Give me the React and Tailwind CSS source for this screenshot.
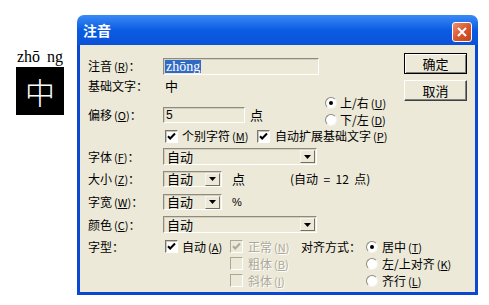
import React from 'react';

// mnemonic letter, e.g. (R) with the R underlined
function Mn({ k }) {
  return (
    <span className="ml-[2px] text-[11px]">
      (<span className="underline underline-offset-1">{k}</span>)
    </span>
  );
}

function Label({ children }) {
  return <div className="w-[75px] shrink-0 whitespace-nowrap leading-[14px]">{children}</div>;
}

function Sunken({ className = '', children }) {
  return (
    <div
      className={
        'flex shrink-0 items-center border border-t-[#8d8a7e] border-l-[#8d8a7e] border-b-white border-r-white bg-[#ECE9D8] shadow-[inset_1px_1px_0_#d2cfc2] ' +
        className
      }
    >
      {children}
    </div>
  );
}

function Combo({ className = '' }) {
  return (
    <Sunken className={'justify-between pl-[3px] pr-[1px] ' + className}>
      <span className="leading-[14px] text-[13px]">自动</span>
      <div className="flex h-[13px] w-[15px] items-center justify-center border border-t-[#f6f5ef] border-l-[#f6f5ef] border-b-[#716f64] border-r-[#716f64] bg-[#ECE9D8]">
        <svg width="7" height="4" viewBox="0 0 7 4">
          <path d="M0 0h7L3.5 4z" fill="#000" />
        </svg>
      </div>
    </Sunken>
  );
}

function Check({ checked, disabled }) {
  return (
    <div
      className={
        'flex h-[13px] w-[13px] shrink-0 items-center justify-center border ' +
        (disabled
          ? 'border-t-[#aca899] border-l-[#aca899] border-b-white border-r-white bg-[#ECE9D8]'
          : 'border-t-[#7a786e] border-l-[#7a786e] border-b-white border-r-white bg-white shadow-[inset_1px_1px_0_#c9c6b8]')
      }
    >
      {checked && (
        <svg width="9" height="9" viewBox="0 0 9 9">
          <path
            d="M1 4.2l2.2 2.3L8 1.5"
            fill="none"
            stroke={disabled ? '#aca899' : '#000'}
            strokeWidth="2"
          />
        </svg>
      )}
    </div>
  );
}

function Radio({ on }) {
  return (
    <div className="flex h-[12px] w-[12px] shrink-0 items-center justify-center rounded-full border border-t-[#8d8a7e] border-l-[#8d8a7e] border-b-[#f4f3ee] border-r-[#f4f3ee] bg-white">
      {on && <div className="h-[4px] w-[4px] rounded-full bg-black" />}
    </div>
  );
}

function Opt({ children, gap = 'gap-[4px]' }) {
  return (
    <div className={'flex h-[17px] shrink-0 items-center whitespace-nowrap ' + gap}>{children}</div>
  );
}

function Button({ children, isDefault }) {
  return (
    <div
      className={
        'flex h-[21px] w-[63px] items-center justify-center bg-[#ECE9D8] ' +
        (isDefault
          ? 'border border-black shadow-[inset_1px_1px_0_#fff,inset_-1px_-1px_0_#808080]'
          : 'border border-t-white border-l-white border-b-[#404040] border-r-[#404040] shadow-[inset_-1px_-1px_0_#808080]')
      }
    >
      <span className="text-[13px] leading-[14px]">{children}</span>
    </div>
  );
}

export default function App() {
  return (
    <div className="flex h-[305px] w-[489px] overflow-hidden bg-white font-['Noto_Sans_CJK_SC',sans-serif] text-[12px] text-black">
      {/* preview pane */}
      <div className="w-[77px] shrink-0 pl-[16px] pt-[49px]">
        <div className="flex w-[48px] justify-between px-[1px] font-['Liberation_Serif',serif] text-[16px] leading-[16px]">
          <span>zhō</span>
          <span>ng</span>
        </div>
        <div className="mt-[2px] flex h-[48px] w-[48px] items-center justify-center bg-black">
          <span className="text-[30px] font-light leading-none text-white">中</span>
        </div>
      </div>

      {/* dialog */}
      <div className="mt-[15px] flex h-[280px] w-[401px] shrink-0 flex-col">
        <div className="flex h-[30px] shrink-0 items-center justify-between rounded-t-[7px] bg-gradient-to-b from-[#3a8af5] via-[#0b5ce3] to-[#0a52d8] pl-[6px] pr-[6px]">
          <span className="text-[14px] font-bold leading-none text-white">注音</span>
          <div className="mt-[3px] flex h-[20px] w-[20px] items-center justify-center rounded-[3px] border border-white bg-gradient-to-br from-[#eb8f6e] via-[#d9582f] to-[#c2421c]">
            <svg width="10" height="10" viewBox="0 0 10 10">
              <path d="M1 1l8 8M9 1l-8 8" stroke="#fff" strokeWidth="2" />
            </svg>
          </div>
        </div>

        <div className="flex flex-1 border-x-[3px] border-b-[3px] border-[#0a48d4] bg-[#ECE9D8]">
          {/* form */}
          <div className="w-[324px] shrink-0 pl-[8px] pt-[12px]">
            <div className="flex h-[18px] items-center">
              <Label>
                注音<Mn k="R" />：
              </Label>
              <Sunken className="h-[17px] w-[156px] pl-[1px]">
                <span className="bg-[#316ac5] px-[1px] font-['Liberation_Serif',serif] text-[14px] leading-[13px] text-white">
                  zhōng
                </span>
              </Sunken>
            </div>

            <div className="mt-[2px] flex h-[18px] items-center">
              <Label>基础文字：</Label>
              <span className="pl-[2px] text-[13px] leading-[14px]">中</span>
            </div>

            <div className="flex h-[33px] items-start">
              <div className="mt-[12px] flex h-[16px] w-[237px] shrink-0 items-center">
                <Label>
                  偏移<Mn k="O" />：
                </Label>
                <Sunken className="h-[16px] w-[82px] pl-[2px]">
                  <span className="font-['Liberation_Sans',sans-serif] text-[12px] leading-[12px]">5</span>
                </Sunken>
                <span className="ml-[5px] text-[13px] leading-[14px]">点</span>
              </div>
              <div className="flex shrink-0 flex-col gap-[1px]">
                <div className="flex h-[16px] items-center gap-[3px] whitespace-nowrap">
                  <Radio on />
                  <span className="leading-[14px]">
                    上/右<Mn k="U" />
                  </span>
                </div>
                <div className="flex h-[16px] items-center gap-[3px] whitespace-nowrap">
                  <Radio />
                  <span className="leading-[14px]">
                    下/左<Mn k="D" />
                  </span>
                </div>
              </div>
            </div>

            <div className="flex h-[16px] items-center whitespace-nowrap pl-[77px]">
              <div className="flex w-[92px] shrink-0 items-center gap-[4px]">
                <Check checked />
                <span className="leading-[14px]">
                  个别字符<Mn k="M" />
                </span>
              </div>
              <div className="flex shrink-0 items-center gap-[5px]">
                <Check checked />
                <span className="leading-[14px]">
                  自动扩展基础文字<Mn k="P" />
                </span>
              </div>
            </div>

            <div className="mt-[4px] flex h-[17px] items-center">
              <Label>
                字体<Mn k="F" />：
              </Label>
              <Combo className="h-[17px] w-[154px]" />
            </div>

            <div className="mt-[6px] flex h-[16px] items-center whitespace-nowrap">
              <Label>
                大小<Mn k="Z" />：
              </Label>
              <Combo className="h-[16px] w-[59px]" />
              <span className="ml-[10px] w-[58px] shrink-0 text-[13px] leading-[14px]">点</span>
              <span className="whitespace-pre leading-[14px]">(自动  =  12  点)</span>
            </div>

            <div className="mt-[7px] flex h-[16px] items-center">
              <Label>
                字宽<Mn k="W" />：
              </Label>
              <Combo className="h-[16px] w-[59px]" />
              <span className="ml-[10px] font-['Liberation_Sans',sans-serif] text-[11px] leading-[14px]">%</span>
            </div>

            <div className="mt-[6px] flex h-[17px] items-center">
              <Label>
                颜色<Mn k="C" />：
              </Label>
              <Combo className="h-[17px] w-[154px]" />
            </div>

            <div className="mt-[5px] flex">
              <div className="flex h-[17px] shrink-0 items-center">
                <Label>字型：</Label>
              </div>
              <div className="w-[67px] shrink-0 pl-[2px]">
                <Opt>
                  <Check checked />
                  <span className="leading-[14px]">
                    自动<Mn k="A" />
                  </span>
                </Opt>
              </div>
              <div className="flex w-[71px] shrink-0 flex-col text-[#aca899] [text-shadow:1px_1px_0_#fff]">
                <Opt gap="gap-[5px]">
                  <Check checked disabled />
                  <span className="leading-[14px]">
                    正常<Mn k="N" />
                  </span>
                </Opt>
                <Opt gap="gap-[5px]">
                  <Check disabled />
                  <span className="leading-[14px]">
                    粗体<Mn k="B" />
                  </span>
                </Opt>
                <Opt gap="gap-[5px]">
                  <Check disabled />
                  <span className="leading-[14px]">
                    斜体<Mn k="I" />
                  </span>
                </Opt>
              </div>
              <div className="flex h-[17px] w-[65px] shrink-0 items-center whitespace-nowrap">
                <span className="leading-[14px]">对齐方式：</span>
              </div>
              <div className="flex shrink-0 flex-col">
                <Opt>
                  <Radio on />
                  <span className="leading-[14px]">
                    居中<Mn k="T" />
                  </span>
                </Opt>
                <Opt>
                  <Radio />
                  <span className="leading-[14px]">
                    左/上对齐<Mn k="K" />
                  </span>
                </Opt>
                <Opt>
                  <Radio />
                  <span className="leading-[14px]">
                    齐行<Mn k="L" />
                  </span>
                </Opt>
              </div>
            </div>
          </div>

          {/* buttons */}
          <div className="flex shrink-0 flex-col gap-[6px] pt-[8px]">
            <Button isDefault>确定</Button>
            <Button>取消</Button>
          </div>
        </div>
      </div>
    </div>
  );
}
